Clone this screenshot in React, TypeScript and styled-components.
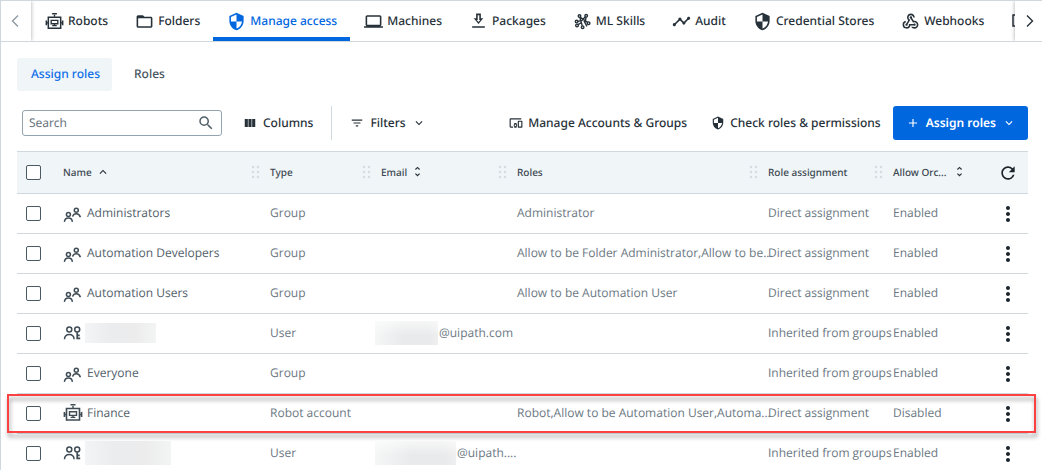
import React from 'react';
import styled, { createGlobalStyle, css } from 'styled-components';
import {
  MdSecurity, MdFolderOpen, MdLaptop, MdTimeline, MdWebhook, MdSearch, MdViewColumn, MdFilterList,
  MdDevicesOther, MdAdd, MdKeyboardArrowDown, MdKeyboardArrowUp, MdUnfoldMore, MdRefresh, MdMoreVert,
} from 'react-icons/md';

const line = '#cfd8dd';
const ink = '#273139';
const muted = '#6b7882';
const blue = '#0067df';

const GlobalStyle = createGlobalStyle`
  * { box-sizing: border-box; }
  body { margin: 0; background: #fff; text-rendering: geometricPrecision; }
  body, button, input { font-family: "Noto Sans", sans-serif; font-size: 12px; line-height: 16px; }
  button, input { text-rendering: inherit; }
  button { border: 0; margin: 0; background: none; cursor: pointer; }
`;

const Shell = styled.div`
  height: 100vh;
  display: flex;
  flex-direction: column;
  border-top: 1px solid ${line};
  border-left: 1px solid ${line};
  overflow: hidden;
`;

const TopBar = styled.nav`
  display: flex;
  flex: none;
  height: 41px;
  border-bottom: 1px solid ${line};
`;

const Pager = styled.button<{ $side: 'left' | 'right' }>`
  flex: none;
  display: flex;
  align-items: center;
  justify-content: center;
  width: ${p => (p.$side === 'left' ? 30 : 27)}px;
  padding: 0;
  background: #fff;
  z-index: 1;
  color: ${p => (p.$side === 'left' ? '#8d9aa4' : ink)};
  box-shadow: 0 0 4px rgba(0, 0, 0, 0.35);
  clip-path: ${p => (p.$side === 'left' ? 'inset(0 -6px 0 0)' : 'inset(0 0 0 -6px)')};
`;

const TabStrip = styled.div`
  flex: 1;
  min-width: 0;
  display: flex;
  overflow: hidden;
`;

const Tab = styled.a<{ $active?: boolean }>`
  flex: none;
  display: flex;
  align-items: center;
  gap: 4px;
  padding: 0 13px 0 14px;
  font-weight: 500;
  text-decoration: none;
  white-space: nowrap;
  color: ${p => (p.$active ? blue : ink)};
  box-shadow: ${p => (p.$active ? `inset 0 -4px ${blue}` : 'none')};
`;

const Main = styled.main`
  flex: 1;
  min-height: 0;
  padding: 16px 14px 0 16px;
  overflow: hidden;
`;

const SubTabs = styled.div`
  display: flex;
  gap: 8px;
`;

const SubTab = styled.a<{ $active?: boolean }>`
  padding: 8px 12px 9px 14px;
  border-radius: 3px;
  font-weight: 500;
  text-decoration: none;
  color: ${p => (p.$active ? '#0f70e8' : '#47545d')};
  background: ${p => (p.$active ? '#f0f5f8' : 'transparent')};
`;

const Toolbar = styled.div`
  display: flex;
  align-items: center;
  height: 34px;
  margin: 15px 0 11px 5px;
`;

const SearchBox = styled.label`
  display: flex;
  align-items: center;
  width: 200px;
  height: 26px;
  padding: 0 6px;
  border: 1px solid #93a4b0;
  border-radius: 3px;
  color: #526069;
`;

const SearchInput = styled.input`
  flex: 1;
  min-width: 0;
  padding: 0;
  border: 0;
  outline: 0;
  color: ${ink};
  &::placeholder { color: #69757e; opacity: 1; }
`;

const ToolButton = styled.button`
  display: flex;
  align-items: center;
  gap: 5px;
  height: 34px;
  padding: 0 12px;
  font-weight: 500;
  white-space: nowrap;
  color: ${ink};
`;

const ColumnsButton = styled(ToolButton)`
  gap: 6px;
  margin-left: 9px;
  padding-right: 18px;
`;

const FilterButton = styled(ToolButton)`
  gap: 6px;
  padding-left: 18px;
  border-left: 1px solid ${line};
`;

const Spacer = styled.div`
  flex: 1;
`;

const PrimaryButton = styled(ToolButton)`
  gap: 6px;
  padding-left: 13px;
  border-radius: 3px;
  font-weight: 600;
  color: #fff;
  background: ${blue};
`;

const Table = styled.table`
  width: 100%;
  table-layout: fixed;
  border-spacing: 0;
`;

const Col = styled.col<{ $w?: number }>`
  width: ${p => (p.$w ? `${p.$w}px` : 'auto')};
`;

const cell = css`
  padding: 0;
  text-align: left;
  white-space: nowrap;
  border-bottom: 1px solid ${line};
  &:not(:first-child, :last-child) { padding-bottom: 2px; }
`;

const Th = styled.th`
  ${cell}
  height: 43px;
  font-size: 10px;
  font-weight: 500;
  color: #3c4851;
  background: #f0f5f8;
  border-top: 1px solid ${line};
`;

const Td = styled.td`
  ${cell}
  height: 40px;
  font-family: "Open Sans", "Noto Sans", sans-serif;
  color: ${muted};
`;

const HeadCell = styled.div`
  display: flex;
  align-items: center;
  gap: 4px;
  padding-right: 10px;
`;

const SortButton = styled.button`
  display: flex;
  padding: 0;
  color: ${ink};
`;

const WideSortButton = styled(SortButton)`
  margin-left: 3px;
`;

const Grip = styled.svg`
  flex: none;
  margin-left: auto;
  fill: #d6dde2;
`;

const Check = styled.input`
  appearance: none;
  display: block;
  width: 15px;
  height: 15px;
  margin: 0 0 0 9px;
  border: 1px solid #4b5963;
  border-radius: 2px;
  background: #fff;
  &:checked { background: ${blue}; }
`;

const NameCell = styled.div`
  display: flex;
  align-items: center;
  gap: 4px;
  color: #526069;
  & > svg { color: #3f4c55; }
`;

const EmailCell = styled.div`
  display: flex;
  align-items: center;
  gap: 1px;
  margin-left: -6px;
`;

const Redacted = styled.span<{ $w: number; $h: number }>`
  flex: none;
  width: ${p => p.$w}px;
  height: ${p => p.$h}px;
  margin-left: -2px;
  background: linear-gradient(90deg, #f3f4f5, #ebeced 35%, #ececed 70%, #f3f4f4);
`;

const EmailRedacted = styled(Redacted)`
  margin-left: 0;
  background: linear-gradient(180deg, rgba(255, 255, 255, 0.6), transparent 60%),
    linear-gradient(90deg, #f5f6f6, #e9eaeb 45%, #e9eaeb 85%, #efeff0);
`;

const IconButton = styled.button`
  display: flex;
  margin-left: auto;
  margin-right: 8px;
  padding: 0;
  color: #1b242b;
`;

const RefreshButton = styled(IconButton)`
  margin-right: 10px;
`;

const Row = styled.tr<{ $marked?: boolean }>`
  position: relative;
  ${p => p.$marked && css`
    & > td:first-child::after {
      content: '';
      position: absolute;
      inset: 0 -8px 1px -10px;
      border: 2px solid #fb4141;
      filter: drop-shadow(1px 4px 2px rgba(0, 0, 0, 0.4));
      pointer-events: none;
    }
  `}
`;

const RobotIcon = ({ size }: { size: number }) => (
  <svg width={size} height={size} viewBox="0 0 20 20" fill="none" stroke="currentColor" strokeWidth="1.6">
    <path d="M7.5 1.8h5M3.5 5.5h13V17h-13zM1.4 9v5M18.6 9v5" />
    <path d="M6.5 8.8h7v3.6h-7zM10 3v2M10 12.400v1.400M7.600 14.400h4.800M1.400 11.500h2M16.500 11.500h2" strokeWidth="1.4" />
  </svg>
);

const PackageIcon = () => (
  <svg width="19" height="19" viewBox="0 0 24 24" fill="currentColor">
    <path d="M18 8h-3V2H9v6H6l6 7 6-7zm-7 2V4h2v6h1.2L12 12.6 9.8 10H11zM4 18h16v2H4z" />
  </svg>
);

const SkillsIcon = () => (
  <svg width="19" height="19" viewBox="0 0 19 19" fill="none" stroke="currentColor" strokeWidth="1.4">
    <circle cx="6.5" cy="4" r="1.3" />
    <circle cx="13.2" cy="3.8" r="1.3" />
    <circle cx="3.6" cy="9.6" r="1.3" />
    <circle cx="4" cy="13.4" r="1.3" />
    <circle cx="15.6" cy="11.2" r="1.3" />
    <circle cx="9.6" cy="15.2" r="1.3" />
    <path d="M7 5.2l7.500 5.200M6.800 5.300l2.500 8.600M13 5.100l-.6 4.200M12.300 4.800L9 8.400l-4.200 1M8.600 10.500l-3.500 2.200M11 8.800l3 5.600" />
  </svg>
);

const BoxIcon = () => (
  <svg width="19" height="19" viewBox="0 0 19 19" fill="none" stroke="currentColor" strokeWidth="1.5">
    <path d="M2 3h15v11H2z" />
  </svg>
);

const GroupIcon = () => (
  <svg width="20" height="20" viewBox="0 -1 20 20" overflow="visible" fill="none" stroke="currentColor" strokeWidth="1.5">
    <circle cx="13.3" cy="6.2" r="2" />
    <path d="M9.600 12.600c.6-2 1.800-2.800 3.700-2.800s3.400 1 4.100 3.400" />
    <circle cx="5.4" cy="10.4" r="2" />
    <path d="M1.400 17.800c.3-2.600 1.600-3.700 4-3.700s3.700 1.100 4 3.700" />
  </svg>
);

const UserIcon = () => (
  <svg width="20" height="20" viewBox="0 -1 20 20" fill="none" stroke="currentColor" strokeWidth="1.5">
    <circle cx="6.3" cy="5.6" r="2.5" />
    <path d="M1.500 15.200c.2-3.500 1.800-4.800 4.800-4.800s4.600 1.300 4.800 4.800" />
    <circle cx="14.2" cy="5.6" r="2.5" />
    <path d="M14.200 8.200v7M14.200 11.400h2.500M14.200 14.400h3" strokeWidth="1.7" />
  </svg>
);

const Chevron = ({ left }: { left?: boolean }) => (
  <svg width="14" height="14" viewBox="0 0 14 14" fill="none" stroke="currentColor" strokeWidth="1.4">
    <path d={left ? 'M9 1.5L3.5 7 9 12.5' : 'M5 1.5L10.5 7 5 12.5'} />
  </svg>
);

const GripDots = () => (
  <Grip width="9" height="14" viewBox="0 0 9 14" aria-hidden="true">
    {[2, 7, 12].map(y => [2, 7].map(x => <circle key={`${x}-${y}`} cx={x} cy={y} r="1.3" />))}
  </Grip>
);

const tabs = [
  { label: 'Robots', icon: <RobotIcon size={19} /> },
  { label: 'Folders', icon: <MdFolderOpen size={19} /> },
  { label: 'Manage access', icon: <MdSecurity size={19} />, active: true },
  { label: 'Machines', icon: <MdLaptop size={19} /> },
  { label: 'Packages', icon: <PackageIcon /> },
  { label: 'ML Skills', icon: <SkillsIcon /> },
  { label: 'Audit', icon: <MdTimeline size={19} /> },
  { label: 'Credential Stores', icon: <MdSecurity size={19} /> },
  { label: 'Webhooks', icon: <MdWebhook size={19} /> },
  { label: '', icon: <BoxIcon /> },
];

type Account = {
  kind: 'Group' | 'User' | 'Robot account';
  name?: string;
  hiddenName?: [number, number];
  email?: string;
  hiddenEmail?: [number, number];
  roles?: string;
  assignment: string;
  access: string;
  marked?: boolean;
};

const direct = 'Direct assignment';
const inherited = 'Inherited from groups';

const accounts: Account[] = [
  { kind: 'Group', name: 'Administrators', roles: 'Administrator', assignment: direct, access: 'Enabled' },
  { kind: 'Group', name: 'Automation Developers', roles: 'Allow to be Folder Administrator,Allow to be...', assignment: direct, access: 'Enabled' },
  { kind: 'Group', name: 'Automation Users', roles: 'Allow to be Automation User', assignment: direct, access: 'Enabled' },
  { kind: 'User', hiddenName: [71, 20], email: '@uipath.com', hiddenEmail: [63, 24], assignment: inherited, access: 'Enabled' },
  { kind: 'Group', name: 'Everyone', assignment: inherited, access: 'Enabled' },
  { kind: 'Robot account', name: 'Finance', roles: 'Robot,Allow to be Automation User,Automa...', assignment: direct, access: 'Disabled', marked: true },
  { kind: 'User', hiddenName: [86, 24], email: '@uipath....', hiddenEmail: [81, 24], assignment: inherited, access: 'Enabled' },
];

const icons = {
  Group: <GroupIcon />,
  User: <UserIcon />,
  'Robot account': <RobotIcon size={20} />,
};

export default function App() {
  return (
    <Shell>
      <GlobalStyle />
      <TopBar>
        <Pager $side="left" aria-label="Previous tabs"><Chevron left /></Pager>
        <TabStrip>
          {tabs.map(t => (
            <Tab key={t.label} href="#" $active={t.active}>{t.icon}{t.label}</Tab>
          ))}
        </TabStrip>
        <Pager $side="right" aria-label="Next tabs"><Chevron /></Pager>
      </TopBar>
      <Main>
        <SubTabs>
          <SubTab href="#" $active>Assign roles</SubTab>
          <SubTab href="#">Roles</SubTab>
        </SubTabs>
        <Toolbar>
          <SearchBox>
            <SearchInput type="text" placeholder="Search" aria-label="Search" />
            <MdSearch size={18} />
          </SearchBox>
          <ColumnsButton><MdViewColumn size={14} />Columns</ColumnsButton>
          <FilterButton><MdFilterList size={14} />Filters<MdKeyboardArrowDown size={14} /></FilterButton>
          <Spacer />
          <ToolButton><MdDevicesOther size={14} />Manage Accounts &amp; Groups</ToolButton>
          <ToolButton><MdSecurity size={14} />Check roles &amp; permissions</ToolButton>
          <PrimaryButton><MdAdd size={14} />Assign roles<MdKeyboardArrowDown size={14} /></PrimaryButton>
        </Toolbar>
        <Table>
          <colgroup>
            <Col $w={46} /><Col $w={207} /><Col $w={111} /><Col $w={136} /><Col /><Col $w={125} /><Col $w={88} /><Col $w={47} />
          </colgroup>
          <thead>
            <tr>
              <Th><Check type="checkbox" aria-label="Select all" /></Th>
              <Th><HeadCell>Name<SortButton aria-label="Sort by name"><MdKeyboardArrowUp size={14} /></SortButton><GripDots /></HeadCell></Th>
              <Th><HeadCell>Type<GripDots /></HeadCell></Th>
              <Th><HeadCell>Email<SortButton aria-label="Sort by email"><MdUnfoldMore size={13} /></SortButton><GripDots /></HeadCell></Th>
              <Th><HeadCell>Roles<GripDots /></HeadCell></Th>
              <Th><HeadCell>Role assignment<GripDots /></HeadCell></Th>
              <Th><HeadCell>Allow Orc...<WideSortButton aria-label="Sort by access"><MdUnfoldMore size={13} /></WideSortButton></HeadCell></Th>
              <Th><RefreshButton aria-label="Refresh"><MdRefresh size={20} /></RefreshButton></Th>
            </tr>
          </thead>
          <tbody>
            {accounts.map((a, i) => (
              <Row key={i} $marked={a.marked}>
                <Td><Check type="checkbox" aria-label={`Select ${a.name ?? a.kind}`} /></Td>
                <Td>
                  <NameCell>
                    {icons[a.kind]}
                    {a.name}
                    {a.hiddenName && <Redacted $w={a.hiddenName[0]} $h={a.hiddenName[1]} />}
                  </NameCell>
                </Td>
                <Td>{a.kind}</Td>
                <Td>
                  {a.hiddenEmail && (
                    <EmailCell><EmailRedacted $w={a.hiddenEmail[0]} $h={a.hiddenEmail[1]} />{a.email}</EmailCell>
                  )}
                </Td>
                <Td>{a.roles}</Td>
                <Td>{a.assignment}</Td>
                <Td>{a.access}</Td>
                <Td><IconButton aria-label="More actions"><MdMoreVert size={24} /></IconButton></Td>
              </Row>
            ))}
          </tbody>
        </Table>
      </Main>
    </Shell>
  );
}
